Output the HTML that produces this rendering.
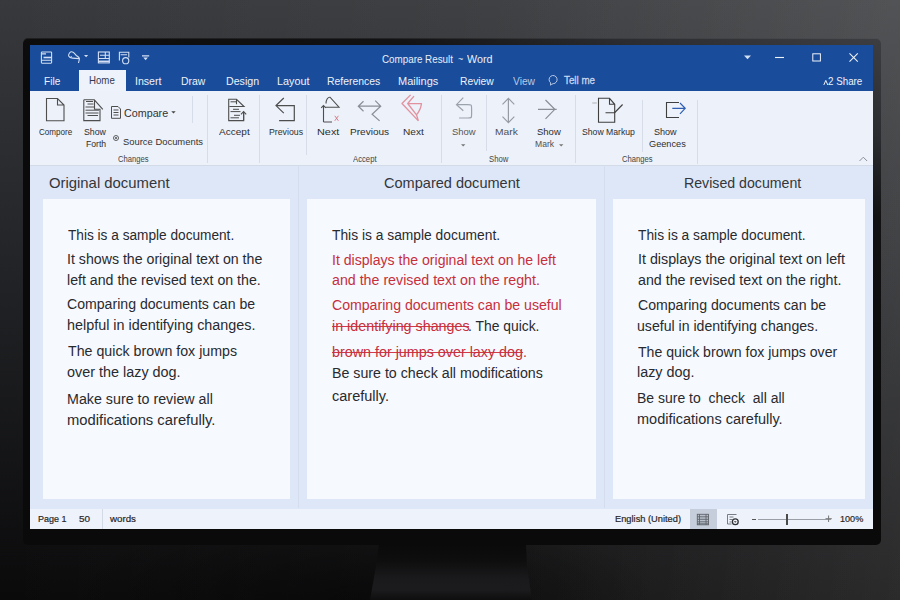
<!DOCTYPE html>
<html><head><meta charset="utf-8"><style>
html,body{margin:0;padding:0;width:900px;height:600px;overflow:hidden}
body{position:relative;font-family:"Liberation Sans", sans-serif;background:#222}
.a{position:absolute}
.t{position:absolute;white-space:pre;line-height:1;transform-origin:0 0;font-family:"Liberation Sans", sans-serif}
svg{position:absolute;left:0;top:0;overflow:visible}
</style></head><body>
<!-- background -->
<div class="a" style="left:0;top:0;width:900px;height:600px;background:linear-gradient(180deg,#38393c 0%,#202124 50%,#0a0a0b 100%)"></div>
<div class="a" style="left:0;top:0;width:900px;height:600px;background:linear-gradient(90deg,rgba(255,255,255,0) 0%,rgba(255,255,255,0.035) 50%,rgba(255,255,255,0.1) 100%)"></div>
<div class="a" style="left:0;top:0;width:900px;height:600px;background:linear-gradient(90deg,rgba(255,255,255,0) 0%,rgba(255,255,255,0) 55%,rgba(255,255,255,0.035) 100%)"></div>
<div class="a" style="left:0;top:0;width:900px;height:600px;background:radial-gradient(ellipse 300px 90px at 360px 600px,rgba(0,0,0,0.45) 0%,rgba(0,0,0,0.2) 60%,rgba(0,0,0,0) 100%)"></div>
<!-- stand -->
<div class="a" style="left:368px;top:544px;width:166px;height:56px;background:linear-gradient(180deg,#0a0a0b 0%,#0e0e0f 30%,#1a1a1c 62%,#1b1b1d 82%,#0e0e0f 100%);clip-path:polygon(11px 0,158px 0,159px 22px,164px 56px,2px 56px,8px 22px)"></div>
<!-- bezel -->
<div class="a" style="left:23px;top:38px;width:858px;height:507px;border-radius:5px;background:linear-gradient(200deg,#3d3e42 0%,#2b2c2f 12%,#121214 22%,#0a0a0b 45%,#0a0a0b 100%);box-shadow:inset 0 1px 0 rgba(255,255,255,0.08)"></div>
<!-- screen -->
<div class="a" style="left:30px;top:44.5px;width:843px;height:484px;background:#dde7f8;overflow:hidden">
  <div class="a" style="left:0;top:0;width:843px;height:46px;background:#194c9a"></div>
  <div class="a" style="left:49px;top:25.8px;width:47px;height:21px;background:#eef2fb"></div>
  <div class="a" style="left:0;top:46px;width:843px;height:75.3px;background:#ecf1fa;border-bottom:1px solid #d3dbe8;box-sizing:border-box"></div>
  <div class="a" style="left:0;top:464px;width:843px;height:20px;background:#eef2fa"></div>
</div>
<!-- pages -->
<div class="a" style="left:42.5px;top:199px;width:247px;height:300px;background:#f6f9fe"></div>
<div class="a" style="left:307px;top:199px;width:288.5px;height:300px;background:#f6f9fe"></div>
<div class="a" style="left:612.5px;top:199px;width:252.5px;height:300px;background:#f6f9fe"></div>
<div class="a" style="left:298px;top:165px;width:1px;height:343px;background:#d3ddee"></div>
<div class="a" style="left:604px;top:165px;width:1px;height:343px;background:#d3ddee"></div>
<!-- strikes -->
<div class="a" style="left:332px;top:325.5px;width:137px;height:1.1px;background:#d23c4a"></div>
<div class="a" style="left:332px;top:352.2px;width:191px;height:1.1px;background:#d23c4a"></div>
<!-- ribbon separators -->
<div class="a" style="left:207px;top:95px;width:1px;height:68px;background:#d6dde8"></div>
<div class="a" style="left:192px;top:96px;width:1px;height:27px;background:#d6dde8"></div>
<div class="a" style="left:259px;top:95px;width:1px;height:68px;background:#d6dde8"></div>
<div class="a" style="left:306px;top:95px;width:1px;height:60px;background:#d6dde8"></div>
<div class="a" style="left:441px;top:95px;width:1px;height:68px;background:#d6dde8"></div>
<div class="a" style="left:486px;top:95px;width:1px;height:56px;background:#d6dde8"></div>
<div class="a" style="left:574.5px;top:95px;width:1px;height:68px;background:#d6dde8"></div>
<div class="a" style="left:642px;top:100px;width:1px;height:52px;background:#d6dde8"></div>
<div class="a" style="left:697px;top:100px;width:1px;height:64px;background:#d6dde8"></div>
<!-- status bar -->
<div class="a" style="left:102px;top:508.5px;width:1px;height:20px;background:#d3dae6"></div>
<div class="a" style="left:689.5px;top:508.5px;width:27px;height:20px;background:#c6cedb"></div>
<div class="a" style="left:757.5px;top:518.5px;width:73px;height:1px;background:#9a9ea6"></div>
<div class="a" style="left:751.5px;top:518.5px;width:4px;height:1px;background:#555"></div>
<div class="a" style="left:785.5px;top:514px;width:2px;height:10.5px;background:#4a4a4a"></div>
<svg width="900" height="600">
 <!-- title bar icons -->
 <g fill="none" stroke="#d3dff4" stroke-width="1.1">
  <rect x="41.4" y="52" width="10.2" height="11.2" rx="0.6"/>
  <path d="M42 53.9h4 M45.5 60.2h5.8 M42 60.3h9.5"/>
  <path d="M43.5 57.5h7.5" stroke-width="1.6"/>
  <path d="M68.6 56.1C68.5 53.5 70 51.8 71.8 51.8C73.8 51.8 75 54 76.2 55.5C78 56.5 79.6 57.5 79.4 59L78.5 63 M68.6 56.1C69.5 57.8 71 58.1 72.5 58.1L79.2 58.6"/>
  <rect x="98.4" y="52" width="10.9" height="10.9"/>
  <path d="M100 55.3h9.3 M105.3 52v6.5 M98.4 58.5h11"/>
  <path d="M98.4 61.3h11" stroke-width="1.5"/>
  <path d="M119.4 60.5v-8.3h9.4v5.3 M120.6 54.8h6.5"/>
  <circle cx="125.7" cy="60.7" r="3.1"/>
 </g>
 <g fill="#d3dff4">
  <path d="M84 55.1h4.2l-2.1 2.2z"/>
  <circle cx="71.2" cy="56.6" r="0.7"/>
  <path d="M142 55.3h7.2v1.2h-7.2z M143.3 57.6h4.6l-2.3 2.7z"/>
  <path d="M744 55.5h7l-3.5 3.8z"/>
 </g>
<g fill="none" stroke="#eef3fb" stroke-width="1.1">
  <path d="M775 57.5h9"/>
  <rect x="812.8" y="53.8" width="7.6" height="7.2" stroke-width="1"/>
  <path d="M849.5 53.3l8.3 8.3 M857.8 53.3l-8.3 8.3"/>
  <path d="M550.6 85.2v-2.4 a4 4.1 0 1 1 2.6 0.9 q-1.6 0.3-2.6 1.5" stroke="#c9d6ee" stroke-width="0.9"/>
  <path d="M823.8 85 l2-4.6 l2 4.6" stroke-width="1"/>
 </g>
 <!-- ribbon icons -->
 <g fill="none" stroke="#4e4e4e" stroke-width="1.1">
  <path d="M46.5 98.5h11l6.5 6.5v15.8h-17.5z M57.5 98.5v6.5h6.5"/>
  <path d="M83.8 99.8h10.5l8.5 9.5 M83.8 99.8v20.8h16.2v-11.3h-5.5v-9"/>
  <path d="M86 101.5h7 M87.5 104h6 M85.5 107h9 M85.5 110.2h13.5 M85.5 113h13 M87.5 115.5h10.5" stroke-width="1"/>
  <path d="M111.5 106.5h6.5l2.5 2.5v9.3h-9z M113.5 110h5 M113.5 112.5h5 M113.5 115h5" stroke-width="1"/>
  <circle cx="116" cy="138" r="2.5" stroke-width="0.9"/><circle cx="116" cy="138" r="1" fill="#4e4e4e" stroke="none"/>
  <!-- accept -->
  <path d="M243.7 113v7.6h-15v-21.3h7.8l7.5 7.2h-14.5 M236.5 99.3v5" />
  <path d="M230.5 101.8h5.5 M233 109.3h6 M230.5 111.6h10 M234 115.3h6 M230.5 117.8h8.5" stroke-width="1"/>
  <path d="M243.6 120.5v-8.5 M241 114.3l2.6-2.8l2.6 2.8"/>
  <!-- previous -->
  <path d="M283.8 98l-7.8 7.6l7.8 7.5 M276.3 105.6h18v15.1h-15.2" stroke-width="1.2"/>
  <!-- next 1 -->
  <path d="M323.5 122v-16.5 M321.2 107.8l2.3-2.3l2.3 2.3 M323.5 122h8.5"/>
  <path d="M326 103.5c0-4 2-6.5 4-6.3l9 10h-13.5" stroke-width="1.1"/>
 </g>
 <g fill="none" stroke="#d9707c" stroke-width="0.9">
  <path d="M334.8 115.8l3.6 5 M338.4 115.8l-3.6 5"/>
 </g>
 <g fill="none" stroke="#8a8f96" stroke-width="1.2">
  <path d="M363.5 101.2l-5.2 5l5.2 5 M358.5 106.2h22.2 M375.2 100.6l5.5 5.6l-8.6 8l7.5 6.7"/>
 </g>
 <g fill="none" stroke="#e3919e" stroke-width="1.3" stroke-linejoin="round">
  <path d="M410.6 94.9l-8.6 8.6l16.4 17.4 M414 96.2l-6.3 7.3l8.8 11.3 M407.7 103.6h13.8q-1 6.5-5 11.2l1.9 6.1"/>
 </g>
 <g fill="none" stroke="#9ca2ab" stroke-width="1.2">
  <path d="M463.3 97.6l-6.8 7.1l6.8 6.1 M456.6 104.7h11c4 0 4 0 4 4v5.3c0 4 0 4-4 4h-8.5"/>
 </g>
 <g fill="none" stroke="#979ca4" stroke-width="1.2">
  <path d="M508.4 98.5v24 M502.5 104.3l5.9-5.9l5.9 5.9 M502.5 116.7l5.9 5.9l5.9-5.9"/>
  <path d="M538 109.3h18.7 M545.5 100l9.3 9.3l-9.3 9.6" stroke="#8a8f97"/>
 </g>
 <g fill="#777">
  <path d="M461 144.3h4.4l-2.2 2.2z M559 144.3h4.4l-2.2 2.2z"/>
  <path d="M171.3 111.3h4.4l-2.2 2.3z" fill="#444"/>
 </g>
 <g fill="none" stroke="#3f3f3f" stroke-width="1.1">
  <path d="M598.5 98.3h11l5.2 6v18h-16.2z M609.5 98.3v6h5.2"/>
  <path d="M605.5 112.7h9.5 M614.8 112.5l7.8-8" />
  <path d="M592.3 103h4.5" stroke="#aaa" stroke-width="0.9"/>
  <path d="M679 102.5h-12.5v15h12.5"/>
 </g>
 <g fill="none" stroke="#2e5fb5" stroke-width="1.2">
  <path d="M672.3 108.3h12.8 M680 103l5.2 5.3l-5.2 5.6"/>
 </g>
 <g fill="none" stroke="#8a8f98" stroke-width="1">
  <path d="M859.5 161l3.8-3.8l3.8 3.8"/>
 </g>
 <!-- status icons -->
 <g fill="none" stroke="#60646b" stroke-width="0.9">
  <rect x="697.3" y="514.3" width="11.2" height="10.5" fill="#b9c0cc"/>
  <path d="M697.3 516.8h11.2 M697.3 519.3h11.2 M697.3 521.8h11.2 M697.3 523.8h11.2 M699.5 514.3v10.5 M706 514.3v10.5"/>
  <path d="M727.5 514.5h9 M727.5 514.5v9.5h4 M729.5 517h4 M729.5 519.5h3 M729.5 522h2" stroke="#6a6e75"/>
 </g>
 <circle cx="735.3" cy="521.7" r="2.9" fill="#f2f4f8" stroke="#2e3036" stroke-width="1.3"/>
 <path d="M733.9 521.2h2.8l-1.4 1.6z" fill="#2e3036"/>
 <g fill="none" stroke="#777" stroke-width="1">
  <path d="M828.6 515.5v6.5 M825.5 518.7h6.3"/>
 </g>
</svg>

<div class="t" style="left:381.55px;top:53.95px;font-size:11px;color:#e9effa;font-weight:normal;transform:scaleX(0.8926);">Compare Result</div>
<div class="t" style="left:457.93px;top:54.85px;font-size:9px;color:#e9effa;font-weight:normal;transform:scaleX(1.0000);">~</div>
<div class="t" style="left:467.20px;top:53.95px;font-size:11px;color:#e9effa;font-weight:normal;transform:scaleX(0.9773);">Word</div>
<div class="t" style="left:44.20px;top:75.65px;font-size:11px;color:#eef3fb;font-weight:normal;transform:scaleX(0.9160);">File</div>
<div class="t" style="left:88.63px;top:75.05px;font-size:11px;color:#323b52;font-weight:normal;transform:scaleX(0.8786);">Home</div>
<div class="t" style="left:135.04px;top:75.65px;font-size:11px;color:#eef3fb;font-weight:normal;transform:scaleX(0.9623);">Insert</div>
<div class="t" style="left:181.17px;top:75.65px;font-size:11px;color:#eef3fb;font-weight:normal;transform:scaleX(0.9447);">Draw</div>
<div class="t" style="left:225.95px;top:75.65px;font-size:11px;color:#eef3fb;font-weight:normal;transform:scaleX(0.9679);">Design</div>
<div class="t" style="left:276.64px;top:75.65px;font-size:11px;color:#eef3fb;font-weight:normal;transform:scaleX(0.9805);">Layout</div>
<div class="t" style="left:327.17px;top:75.65px;font-size:11px;color:#eef3fb;font-weight:normal;transform:scaleX(0.9455);">References</div>
<div class="t" style="left:398.13px;top:75.65px;font-size:11px;color:#eef3fb;font-weight:normal;transform:scaleX(0.9968);">Mailings</div>
<div class="t" style="left:459.68px;top:75.65px;font-size:11px;color:#eef3fb;font-weight:normal;transform:scaleX(0.9362);">Review</div>
<div class="t" style="left:513.30px;top:75.65px;font-size:11px;color:#b9c8e6;font-weight:normal;transform:scaleX(0.9312);">View</div>
<div class="t" style="left:563.78px;top:75.25px;font-size:11px;color:#c9d5ee;font-weight:normal;transform:scaleX(0.8908);-webkit-text-stroke:0.3px #c9d5ee">Tell me</div>
<div class="t" style="left:827.85px;top:75.65px;font-size:11px;color:#eef3fb;font-weight:normal;transform:scaleX(0.8904);">2 Share</div>
<div class="t" style="left:38.58px;top:127.23px;font-size:9.5px;color:#2e2e2e;font-weight:normal;transform:scaleX(0.8498);">Compore</div>
<div class="t" style="left:83.65px;top:127.23px;font-size:9.5px;color:#2e2e2e;font-weight:normal;transform:scaleX(0.9241);">Show</div>
<div class="t" style="left:86.32px;top:139.43px;font-size:9.5px;color:#2e2e2e;font-weight:normal;transform:scaleX(0.9102);">Forth</div>
<div class="t" style="left:124.29px;top:108.17px;font-size:10.5px;color:#333;font-weight:normal;transform:scaleX(1.0225);">Compare</div>
<div class="t" style="left:123.34px;top:137.17px;font-size:9.8px;color:#333;font-weight:normal;transform:scaleX(0.9598);">Source Documents</div>
<div class="t" style="left:117.66px;top:155.28px;font-size:8.5px;color:#454545;font-weight:normal;transform:scaleX(0.8989);">Changes</div>
<div class="t" style="left:219.40px;top:126.97px;font-size:9.8px;color:#2e2e2e;font-weight:normal;transform:scaleX(1.0243);">Accept</div>
<div class="t" style="left:269.31px;top:127.23px;font-size:9.5px;color:#2e2e2e;font-weight:normal;transform:scaleX(0.9199);">Previous</div>
<div class="t" style="left:316.67px;top:126.97px;font-size:9.8px;color:#2e2e2e;font-weight:normal;transform:scaleX(1.1097);">Next</div>
<div class="t" style="left:350.23px;top:126.97px;font-size:9.8px;color:#2e2e2e;font-weight:normal;transform:scaleX(1.0270);">Previous</div>
<div class="t" style="left:402.83px;top:126.97px;font-size:9.8px;color:#2e2e2e;font-weight:normal;transform:scaleX(1.0323);">Next</div>
<div class="t" style="left:352.80px;top:155.28px;font-size:8.5px;color:#454545;font-weight:normal;transform:scaleX(0.9077);">Accept</div>
<div class="t" style="left:452.34px;top:126.97px;font-size:9.8px;color:#565656;font-weight:normal;transform:scaleX(0.9658);">Show</div>
<div class="t" style="left:494.91px;top:126.97px;font-size:9.8px;color:#505050;font-weight:normal;transform:scaleX(1.0476);">Mark</div>
<div class="t" style="left:536.94px;top:126.97px;font-size:9.8px;color:#2e2e2e;font-weight:normal;transform:scaleX(0.9699);">Show</div>
<div class="t" style="left:534.69px;top:140.22px;font-size:8.8px;color:#505050;font-weight:normal;transform:scaleX(0.9748);">Mark</div>
<div class="t" style="left:489.16px;top:155.28px;font-size:8.5px;color:#454545;font-weight:normal;transform:scaleX(0.9102);">Show</div>
<div class="t" style="left:581.66px;top:127.23px;font-size:9.5px;color:#2e2e2e;font-weight:normal;transform:scaleX(0.9115);">Show Markup</div>
<div class="t" style="left:654.35px;top:126.97px;font-size:9.8px;color:#2e2e2e;font-weight:normal;transform:scaleX(0.9244);">Show</div>
<div class="t" style="left:648.53px;top:138.97px;font-size:9.8px;color:#2e2e2e;font-weight:normal;transform:scaleX(0.9381);">Geences</div>
<div class="t" style="left:621.66px;top:155.28px;font-size:8.5px;color:#454545;font-weight:normal;transform:scaleX(0.8989);">Changes</div>
<div class="t" style="left:48.88px;top:174.95px;font-size:15px;color:#34363a;font-weight:normal;transform:scaleX(0.9901);">Original document</div>
<div class="t" style="left:384.27px;top:174.95px;font-size:15px;color:#34363a;font-weight:normal;transform:scaleX(0.9695);">Compared document</div>
<div class="t" style="left:683.82px;top:174.95px;font-size:15px;color:#34363a;font-weight:normal;transform:scaleX(0.9440);">Revised document</div>
<div class="t" style="left:67.76px;top:228.10px;font-size:14px;color:#292a2e;font-weight:normal;transform:scaleX(0.9753);">This is a sample document.</div>
<div class="t" style="left:67.24px;top:251.80px;font-size:14px;color:#292a2e;font-weight:normal;transform:scaleX(1.0119);">It shows the original text on the</div>
<div class="t" style="left:67.11px;top:272.60px;font-size:14px;color:#292a2e;font-weight:normal;transform:scaleX(1.0117);">left and the revised text on the.</div>
<div class="t" style="left:67.37px;top:297.10px;font-size:14px;color:#292a2e;font-weight:normal;transform:scaleX(1.0074);">Comparing documents can be</div>
<div class="t" style="left:67.10px;top:317.80px;font-size:14px;color:#292a2e;font-weight:normal;transform:scaleX(1.0259);">helpful in identifying changes.</div>
<div class="t" style="left:67.75px;top:344.30px;font-size:14px;color:#292a2e;font-weight:normal;transform:scaleX(1.0154);">The quick brown fox jumps</div>
<div class="t" style="left:67.49px;top:364.70px;font-size:14px;color:#292a2e;font-weight:normal;transform:scaleX(1.0280);">over the lazy dog.</div>
<div class="t" style="left:67.05px;top:391.80px;font-size:14px;color:#292a2e;font-weight:normal;transform:scaleX(1.0190);">Make sure to review all</div>
<div class="t" style="left:67.08px;top:412.60px;font-size:14px;color:#292a2e;font-weight:normal;transform:scaleX(1.0556);">modifications carefully.</div>
<div class="t" style="left:638.15px;top:228.10px;font-size:14px;color:#292a2e;font-weight:normal;transform:scaleX(0.9836);">This is a sample document.</div>
<div class="t" style="left:638.23px;top:251.70px;font-size:14px;color:#292a2e;font-weight:normal;transform:scaleX(1.0191);">It displays the original text on left</div>
<div class="t" style="left:637.66px;top:272.50px;font-size:14px;color:#292a2e;font-weight:normal;transform:scaleX(1.0170);">and the revised text on the right.</div>
<div class="t" style="left:637.67px;top:297.70px;font-size:14px;color:#292a2e;font-weight:normal;transform:scaleX(1.0074);">Comparing documents can be</div>
<div class="t" style="left:637.42px;top:318.50px;font-size:14px;color:#292a2e;font-weight:normal;transform:scaleX(1.0072);">useful in identifying changes.</div>
<div class="t" style="left:638.05px;top:344.50px;font-size:14px;color:#292a2e;font-weight:normal;transform:scaleX(1.0080);">The quick brown fox jumps over</div>
<div class="t" style="left:637.40px;top:365.10px;font-size:14px;color:#292a2e;font-weight:normal;transform:scaleX(1.0265);">lazy dog.</div>
<div class="t" style="left:637.18px;top:391.30px;font-size:14px;color:#292a2e;font-weight:normal;transform:scaleX(0.9988);">Be sure to  check  all all</div>
<div class="t" style="left:637.39px;top:412.10px;font-size:14px;color:#292a2e;font-weight:normal;transform:scaleX(1.0361);">modifications carefully.</div>
<div class="t" style="left:332.25px;top:228.00px;font-size:14px;color:#292a2e;font-weight:normal;transform:scaleX(0.9865);">This is a sample document.</div>
<div class="t" style="left:332.24px;top:252.70px;font-size:14px;color:#c62f3b;font-weight:normal;transform:scaleX(1.0056);">It displays the original text on he left</div>
<div class="t" style="left:331.87px;top:273.30px;font-size:14px;color:#c62f3b;font-weight:normal;transform:scaleX(1.0154);">and the revised text on the reght.</div>
<div class="t" style="left:331.87px;top:298.10px;font-size:14px;color:#c62f3b;font-weight:normal;transform:scaleX(1.0075);">Comparing documents can be useful</div>
<div class="t" style="left:332.36px;top:366.20px;font-size:14px;color:#292a2e;font-weight:normal;transform:scaleX(1.0149);">Be sure to check all modifications</div>
<div class="t" style="left:331.98px;top:389.20px;font-size:14px;color:#292a2e;font-weight:normal;transform:scaleX(1.0366);">carefully.</div>
<div class="t" style="left:331.61px;top:318.70px;font-size:14px;color:#c62f3b;font-weight:normal;transform:scaleX(1.0221);">in identifying shanges</div>
<div class="t" style="left:468.26px;top:318.70px;font-size:14px;color:#292a2e;font-weight:normal;transform:scaleX(0.9910);">. The quick.</div>
<div class="t" style="left:331.61px;top:344.70px;font-size:14px;color:#c62f3b;font-weight:normal;transform:scaleX(1.0228);">brown for jumps over laxy dog.</div>
<div class="t" style="left:38.29px;top:514.32px;font-size:9.5px;color:#262626;font-weight:normal;transform:scaleX(0.9455);-webkit-text-stroke:0.2px #262626">Page 1</div>
<div class="t" style="left:78.61px;top:514.32px;font-size:9.5px;color:#262626;font-weight:normal;transform:scaleX(1.0430);-webkit-text-stroke:0.2px #262626">50</div>
<div class="t" style="left:109.70px;top:514.32px;font-size:9.5px;color:#262626;font-weight:normal;transform:scaleX(1.0240);-webkit-text-stroke:0.2px #262626">words</div>
<div class="t" style="left:614.87px;top:514.32px;font-size:9.5px;color:#262626;font-weight:normal;transform:scaleX(0.9766);-webkit-text-stroke:0.2px #262626">English (United)</div>
<div class="t" style="left:840.38px;top:514.32px;font-size:9.5px;color:#262626;font-weight:normal;transform:scaleX(0.9548);-webkit-text-stroke:0.2px #262626">100%</div>
</body></html>
